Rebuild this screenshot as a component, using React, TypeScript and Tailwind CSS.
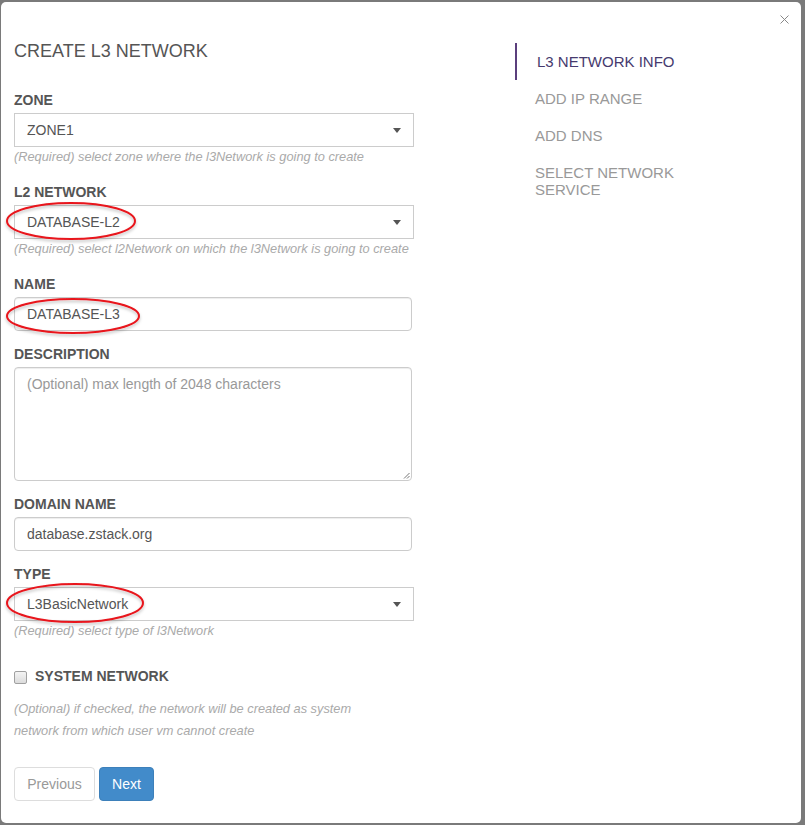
import React from "react";

const font = { fontFamily: '"Liberation Sans", Arial, sans-serif' };

function Arrow() {
  return (
    <svg width="8" height="5" viewBox="0 0 8 5" className="absolute right-[12px] top-[14px]">
      <path d="M0 0 L8 0 L4 5 Z" fill="#555" />
    </svg>
  );
}

function Label({ children, className = "" }: { children: React.ReactNode; className?: string }) {
  return (
    <div className={"h-[20px] leading-[20px] text-[14px] font-bold text-[#555] mb-[3px] " + className}>{children}</div>
  );
}

function Select({ value }: { value: string }) {
  return (
    <div className="relative w-[400px] h-[34px] border border-[#ccc] bg-white pl-[12px] leading-[32px] text-[14px] text-[#555]">
      {value}
      <Arrow />
    </div>
  );
}

function Input({ value }: { value: string }) {
  return (
    <div className="w-[398px] h-[34px] border border-[#ccc] rounded-[4px] bg-white pl-[12px] leading-[32px] text-[14px] text-[#555] shadow-[inset_0_1px_1px_rgba(0,0,0,0.075)]">
      {value}
    </div>
  );
}

function Help({ children }: { children: React.ReactNode }) {
  return <div className="mt-[1px] h-[18px] leading-[18px] text-[12.8px] italic text-[#aaa] whitespace-nowrap">{children}</div>;
}

export default function App() {
  return (
    <div className="w-[805px] h-[825px] bg-[#7a7a7a] pt-[2px] pl-[1px] overflow-hidden" style={font}>
      <div className="relative w-[800px] h-[821px] bg-white rounded-[5px] flex">
        {/* close */}
        <svg width="9" height="9" viewBox="0 0 9 9" className="absolute top-[13px] right-[12px]">
          <path d="M0.5 0.5 L8.5 8.5 M8.5 0.5 L0.5 8.5" stroke="#888" strokeWidth="1" />
        </svg>

        {/* left column */}
        <div className="ml-[13px] w-[400px] flex flex-col">
          <div className="mt-[39px] h-[20px] leading-[20px] text-[18px] text-[#555]">CREATE L3 NETWORK</div>

          <Label className="mt-[29px]">ZONE</Label>
          <Select value="ZONE1" />
          <Help>(Required) select zone where the l3Network is going to create</Help>

          <Label className="mt-[16px]">L2 NETWORK</Label>
          <Select value="DATABASE-L2" />
          <Help>(Required) select l2Network on which the l3Network is going to create</Help>

          <Label className="mt-[16px]">NAME</Label>
          <Input value="DATABASE-L3" />

          <Label className="mt-[13px]">DESCRIPTION</Label>
          <div className="relative w-[398px] h-[114px] border border-[#ccc] rounded-[4px] bg-white pl-[12px] pt-[6px] leading-[20px] text-[14px] text-[#999] shadow-[inset_0_1px_1px_rgba(0,0,0,0.075)]">
            (Optional) max length of 2048 characters
            <svg width="7" height="7" viewBox="0 0 7 7" className="absolute right-[1px] bottom-[1px]">
              <path d="M1 6.5 L6.5 1 M4 6.5 L6.5 4" stroke="#777" strokeWidth="1" />
            </svg>
          </div>

          <Label className="mt-[13px]">DOMAIN NAME</Label>
          <Input value="database.zstack.org" />

          <Label className="mt-[13px]">TYPE</Label>
          <Select value="L3BasicNetwork" />
          <Help>(Required) select type of l3Network</Help>

          <div className="mt-[26px] h-[20px] flex items-center">
            <div className="w-[13px] h-[13px] mt-[3px] rounded-[2px] border border-[#a0a0a0] bg-gradient-to-b from-[#f4f4f4] to-[#dcdcdc]" />
            <span className="ml-[8px] text-[14px] font-bold text-[#555] leading-[20px]">SYSTEM NETWORK</span>
          </div>

          <div className="mt-[12px] text-[12.8px] italic text-[#aaa] leading-[22px] w-[360px]">
            (Optional) if checked, the network will be created as system
            <br />
            network from which user vm cannot create
          </div>

          <div className="mt-[25px] flex gap-[4px]">
            <button className="h-[34px] w-[81px] border border-[#ddd] rounded-[4px] bg-white text-[14px] text-[#999]">Previous</button>
            <button className="h-[34px] w-[55px] rounded-[4px] bg-[#428bca] border border-[#3d80ba] text-[14px] text-white">Next</button>
          </div>
        </div>

        {/* right nav */}
        <div className="ml-[101px] mt-[41px] w-[200px] flex flex-col text-[15px] leading-[17px]">
          <div className="border-l-2 border-[#5b3f7d] pl-[20px] py-[10px] text-[#463a6e]">L3 NETWORK INFO</div>
          <div className="pl-[20px] py-[10px] text-[#999]">ADD IP RANGE</div>
          <div className="pl-[20px] py-[10px] text-[#999]">ADD DNS</div>
          <div className="pl-[20px] py-[10px] text-[#999]">
            SELECT NETWORK
            <br />
            SERVICE
          </div>
        </div>

        {/* annotation ellipses */}
        <svg className="absolute left-0 top-0 pointer-events-none" width="800" height="821">
          <defs>
            <filter id="sh" x="-20%" y="-50%" width="140%" height="200%">
              <feDropShadow dx="0" dy="2" stdDeviation="1.5" floodColor="#000" floodOpacity="0.25" />
            </filter>
          </defs>
          <g fill="none" stroke="#e8141c" strokeWidth="2" filter="url(#sh)">
            <ellipse cx="70" cy="219" rx="64" ry="18" />
            <ellipse cx="72" cy="314" rx="66" ry="17" />
            <ellipse cx="74" cy="601" rx="68" ry="19" />
          </g>
        </svg>
      </div>
    </div>
  );
}
